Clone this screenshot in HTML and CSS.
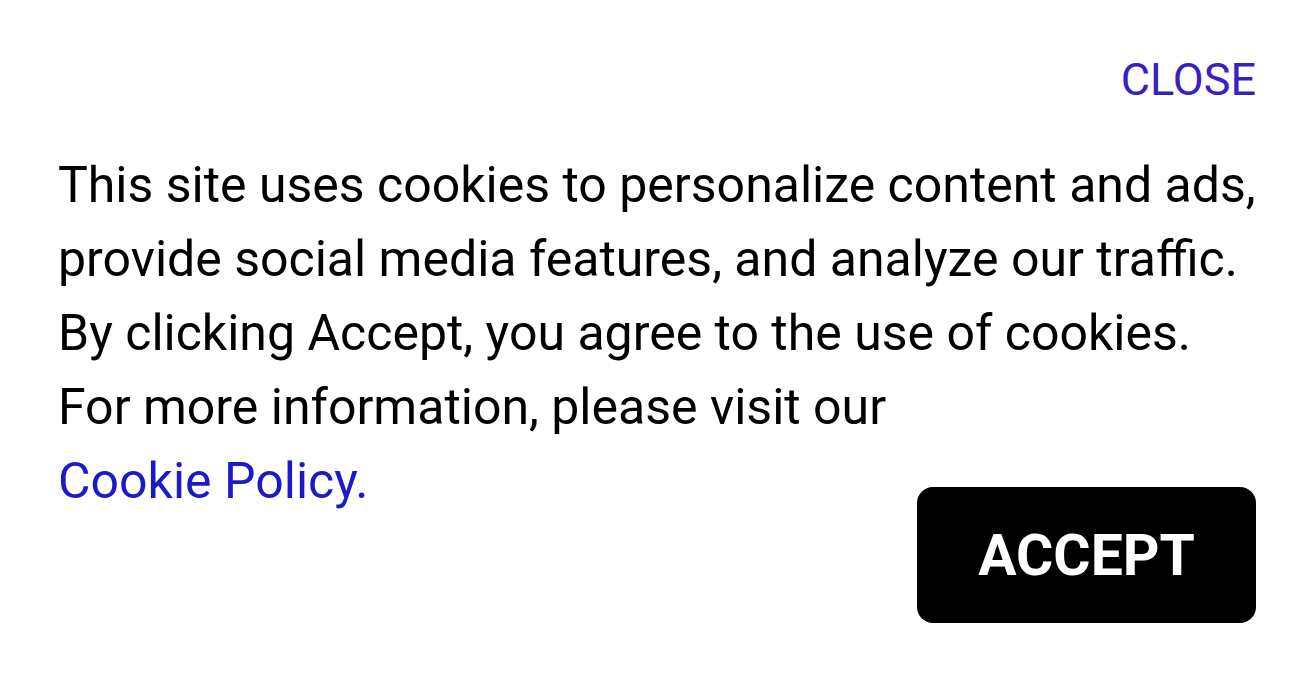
FILE: index.html
```html
<!DOCTYPE html>
<html lang="en">
<head>
    <meta charset="UTF-8">
    <meta name="viewport" content="width=device-width, initial-scale=1.0">
    <title>Cookie notice</title>
    <link rel="stylesheet" href="styles.css">
</head>
<body>
    <div class="cookie-banner">
        <div class="top-bar">
            <a class="close-link" href="#">CLOSE</a>
        </div>
        <div class="content">
            <p class="message">This site uses cookies to personalize content and ads, provide social media features, and analyze our traffic. By clicking Accept, you agree to the use of cookies. For more information, please visit our</p>
            <a class="policy-link" href="#">Cookie Policy.</a>
            <button class="accept-button">ACCEPT</button>
        </div>
    </div>
</body>
</html>
```

FILE: styles.css
```css
body { margin: 0; background: #fff; font-family: Roboto, "Noto Sans", sans-serif; color: #000; }
.cookie-banner { padding: 54px 30px 0 58px; }
.top-bar { display: flex; justify-content: flex-end; padding-right: 19px; }
.close-link { color: #3a1fc4; text-decoration: none; font-size: 45px; line-height: 52px; }
.content { display: grid; grid-template-columns: 1fr auto; margin-top: 42px; }
.message { grid-column: 1 / 3; margin: 0; font-size: 50px; line-height: 74px; }
.policy-link { color: #1a1ac8; text-decoration: none; font-size: 50px; line-height: 74px; align-self: start; justify-self: start; }
.accept-button {
    margin-top: 43px;
    margin-right: 19px;
    width: 339px;
    height: 136px;
    background: #000;
    color: #fff;
    border: none;
    border-radius: 16px;
    font-family: Roboto, "Noto Sans", sans-serif;
    font-weight: 700;
    font-size: 57px;
    cursor: pointer;
}
```
